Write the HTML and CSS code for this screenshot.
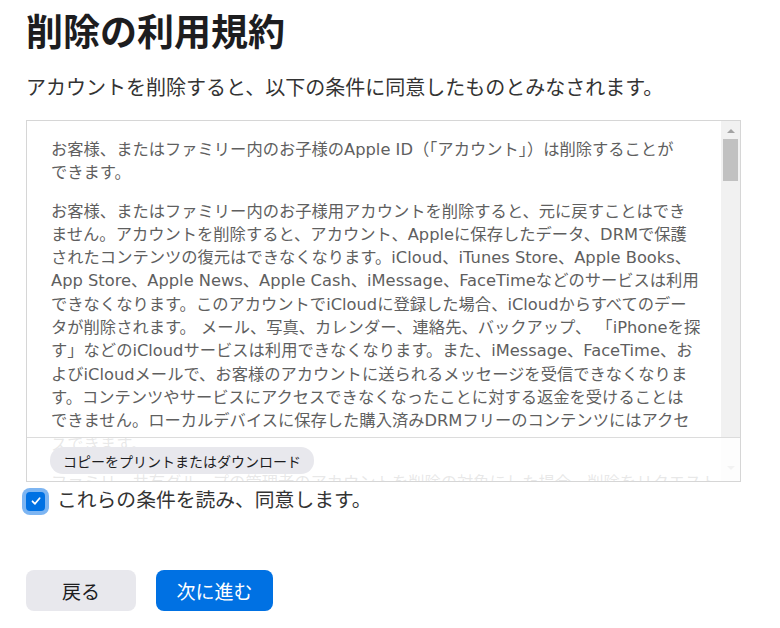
FILE: index.html
```html
<!DOCTYPE html>
<html lang="ja">
<head>
    <meta charset="UTF-8">
    <meta name="viewport" content="width=device-width, initial-scale=1.0">
    <title>削除の利用規約</title>
    <link rel="stylesheet" href="styles.css">
</head>
<body>

    <div class="page">
        <h1 class="title">削除の利用規約</h1>
        <p class="lead">アカウントを削除すると、以下の条件に同意したものとみなされます。</p>

        <!-- Terms box with fake scrollbar -->
        <div class="terms-box">
            <div class="terms-scroll">
                <p>お客様、またはファミリー内のお子様のApple ID（「アカウント」）は削除することが<br>できます。</p>
                <p>お客様、またはファミリー内のお子様用アカウントを削除すると、元に戻すことはでき<br>ません。アカウントを削除すると、アカウント、Appleに保存したデータ、DRMで保護<br>されたコンテンツの復元はできなくなります。iCloud、iTunes Store、Apple Books、<br>App Store、Apple News、Apple Cash、iMessage、FaceTimeなどのサービスは利用<br>できなくなります。このアカウントでiCloudに登録した場合、iCloudからすべてのデー<br>タが削除されます。 メール、写真、カレンダー、連絡先、バックアップ、 「iPhoneを探<br>す」などのiCloudサービスは利用できなくなります。また、iMessage、FaceTime、お<br>よびiCloudメールで、お客様のアカウントに送られるメッセージを受信できなくなりま<br>す。コンテンツやサービスにアクセスできなくなったことに対する返金を受けることは<br>できません。ローカルデバイスに保存した購入済みDRMフリーのコンテンツにはアクセ<br>スできます。</p>
                <p>ファミリー共有グループの管理者のアカウントを削除の対象にした場合、削除をリクエストしたアカウントに<br>関連付けられているすべてのアカウントがグループから削除されます。</p>
            </div>
            <div class="scrollbar">
                <span class="arrow up"></span>
                <span class="thumb"></span>
                <span class="arrow down"></span>
            </div>
            <div class="terms-footer">
                <button class="print-btn">コピーをプリントまたはダウンロード</button>
            </div>
        </div>

        <label class="agree">
            <span class="check">
                <svg viewBox="0 0 12 12" width="12" height="12"><path d="M2.5 6.3 L5 8.8 L9.6 3.2" fill="none" stroke="#fff" stroke-width="1.8" stroke-linecap="round" stroke-linejoin="round"/></svg>
            </span>
            <span class="agree-text">これらの条件を読み、同意します。</span>
        </label>

        <div class="actions">
            <button class="btn btn-back">戻る</button>
            <button class="btn btn-next">次に進む</button>
        </div>
    </div>

</body>
</html>
```

FILE: styles.css
```css
body {
    margin: 0;
    font-family: "DejaVu Sans", "Noto Sans CJK JP", sans-serif;
    color: #333;
    background: #fff;
}
.page {
    padding: 12px 0 0 26px;
    width: 715px;
}
.title {
    margin: 0;
    font-size: 37px;
    line-height: 44px;
    font-weight: bold;
    color: #1d1d1f;
}
.lead {
    margin: 18px 0 0;
    font-size: 20px;
    line-height: 28px;
    color: #333;
    white-space: nowrap;
}
.terms-box {
    position: relative;
    display: flex;
    height: 362px;
    margin-top: 18px;
    border: 1px solid #d6d6d6;
    box-sizing: border-box;
    overflow: hidden;
}
.terms-scroll {
    flex: 1;
    overflow: hidden;
    padding: 17px 0 0 24px;
    font-size: 16.3px;
    line-height: 23.3px;
    color: #5f5f5f;
}
.terms-scroll p {
    margin: 0 0 15px;
    white-space: nowrap;
}
.scrollbar {
    width: 19px;
    background: #f1f1f1;
    display: flex;
    flex-direction: column;
    align-items: center;
    position: relative;
}
.arrow {
    width: 0;
    height: 0;
    border-left: 4px solid transparent;
    border-right: 4px solid transparent;
}
.arrow.up {
    margin-top: 8px;
    border-bottom: 4px solid #a3a3a3;
}
.arrow.down {
    position: absolute;
    bottom: 11px;
    border-top: 4px solid #a3a3a3;
}
.thumb {
    width: 15px;
    height: 42px;
    margin-top: 6px;
    background: #c1c1c1;
}
.terms-footer {
    position: absolute;
    left: 0;
    right: 0;
    bottom: 0;
    height: 44px;
    border-top: 1px solid #dcdcdc;
    background: rgba(255, 255, 255, 0.86);
    padding: 9px 0 0 23px;
    box-sizing: border-box;
}
.print-btn {
    height: 27px;
    padding: 0 13px;
    border: none;
    border-radius: 13px;
    background: #e8e8ed;
    font-family: "DejaVu Sans", "Noto Sans CJK JP", sans-serif;
    font-size: 14px;
    color: #1d1d1f;
}
.agree {
    display: flex;
    align-items: center;
    gap: 8px;
    margin: 5px 0 0 -4px;
    font-size: 19.8px;
    line-height: 28px;
    color: #333;
}
.check {
    flex: none;
    width: 19px;
    height: 19px;
    border-radius: 4px;
    background: #0071e3;
    box-shadow: 0 0 0 4px #7db5f2;
    margin: 4px;
    display: flex;
    align-items: center;
    justify-content: center;
}
.check svg {
    display: block;
}
.actions {
    display: flex;
    gap: 20px;
    margin-top: 55px;
}
.btn {
    height: 41px;
    border: none;
    border-radius: 8px;
    font-family: "DejaVu Sans", "Noto Sans CJK JP", sans-serif;
    font-size: 19px;
}
.btn-back {
    width: 110px;
    background: #e8e8ed;
    color: #1d1d1f;
}
.btn-next {
    width: 117px;
    background: #0071e3;
    color: #fff;
}
```
